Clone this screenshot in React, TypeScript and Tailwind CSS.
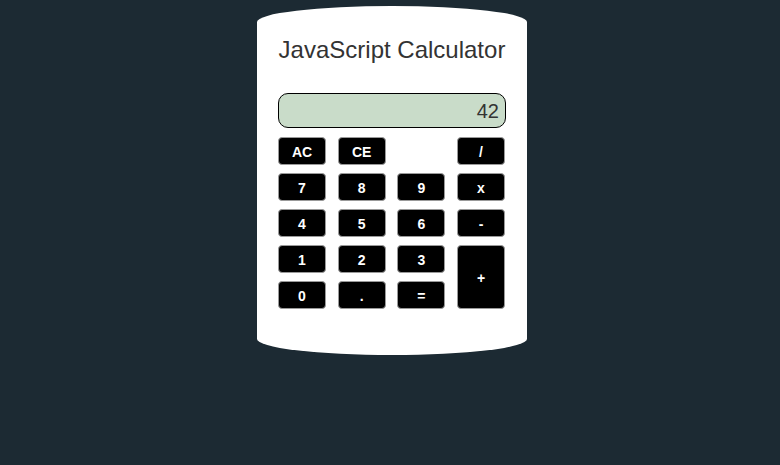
const keys: { label: string; col: string; row: string }[] = [
  { label: 'AC', col: 'col-start-1', row: 'row-start-1' },
  { label: 'CE', col: 'col-start-2', row: 'row-start-1' },
  { label: '/', col: 'col-start-4', row: 'row-start-1' },
  { label: '7', col: 'col-start-1', row: 'row-start-2' },
  { label: '8', col: 'col-start-2', row: 'row-start-2' },
  { label: '9', col: 'col-start-3', row: 'row-start-2' },
  { label: 'x', col: 'col-start-4', row: 'row-start-2' },
  { label: '4', col: 'col-start-1', row: 'row-start-3' },
  { label: '5', col: 'col-start-2', row: 'row-start-3' },
  { label: '6', col: 'col-start-3', row: 'row-start-3' },
  { label: '-', col: 'col-start-4', row: 'row-start-3' },
  { label: '1', col: 'col-start-1', row: 'row-start-4' },
  { label: '2', col: 'col-start-2', row: 'row-start-4' },
  { label: '3', col: 'col-start-3', row: 'row-start-4' },
  { label: '+', col: 'col-start-4', row: 'row-start-4 row-span-2' },
  { label: '0', col: 'col-start-1', row: 'row-start-5' },
  { label: '.', col: 'col-start-2', row: 'row-start-5' },
  { label: '=', col: 'col-start-3', row: 'row-start-5' },
];

export default function App() {
  return (
    <div className="min-h-[465px] w-full bg-[#1c2a33] pt-[6px] font-['Liberation_Sans',Arial,sans-serif]">
      <div className="ml-[257px] h-[349px] w-[270px] rounded-[50%/16px] bg-white px-[21px] pt-[30px]">
        <h1 className="text-center text-[24px] leading-[28px] text-[#333]">JavaScript Calculator</h1>
        <div className="mt-[29px] flex h-[35px] items-center justify-end rounded-[10px] border border-black bg-[#c9dcc9] pr-[6px] text-[20px] text-[#333]">
          42
        </div>
        <div className="mt-[9px] grid grid-cols-[48px_48px_48px_48px] grid-rows-[28px_28px_28px_28px_28px] gap-x-[11.67px] gap-y-[8px]">
          {keys.map((k) => (
            <button
              key={k.label}
              className={`${k.col} ${k.row} flex items-center justify-center rounded-[4px] border border-[#9a9a9a] bg-black pt-[3px] text-[14px] font-bold text-white`}
            >
              {k.label}
            </button>
          ))}
        </div>
      </div>
    </div>
  );
}
